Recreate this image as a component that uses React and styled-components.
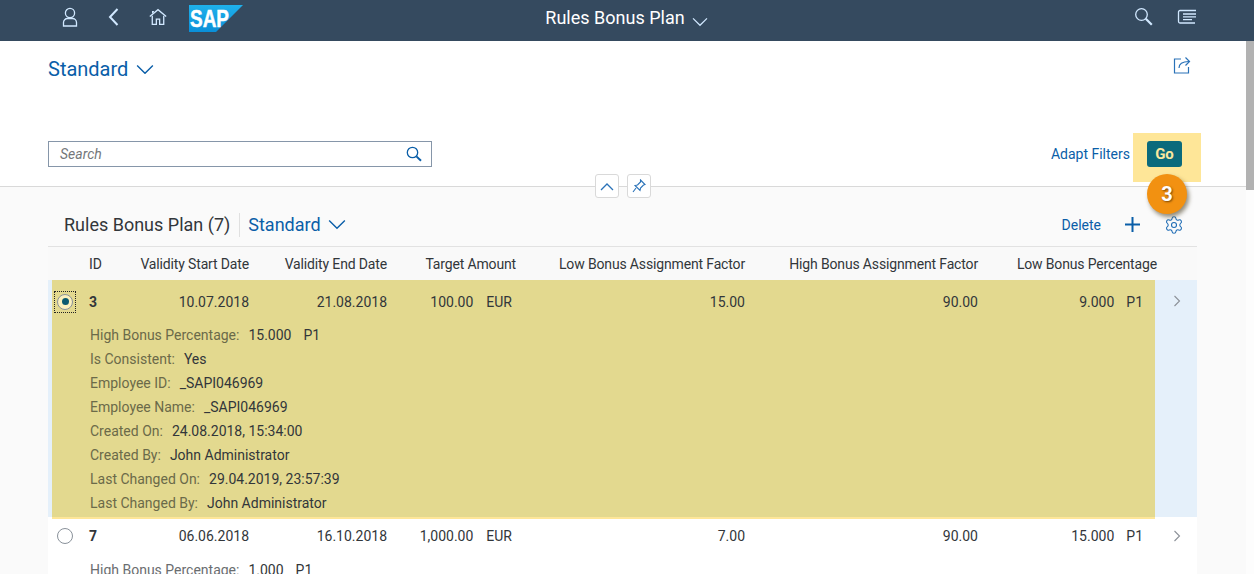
import React from 'react';
import styled, { createGlobalStyle } from 'styled-components';
import { Settings } from 'lucide-react';

const GlobalStyle = createGlobalStyle`
  html, body { margin: 0; padding: 0; height: 100%; overflow: hidden; }
  body { font-family: Roboto, "Liberation Sans", sans-serif; color: #32363a; background: #fafafa; }
  * { box-sizing: border-box; }
`;

const Page = styled.div`
  width: 1254px;
  height: 574px;
  overflow: hidden;
  display: flex;
  flex-direction: column;
`;

const ShellBar = styled.header`
  height: 41px;
  flex: none;
  background: #354a5f;
  display: flex;
  align-items: center;
  position: relative;
  padding: 0 56px 0 59px;
`;

const ShellIcon = styled.svg`
  width: ${p => p.$size || 22}px;
  height: ${p => p.$size || 22}px;
  margin-right: ${p => p.$gap || 0}px;
  margin-top: -7px;
  fill: none;
  stroke: #d1e8ff;
  stroke-width: ${p => p.$stroke || 1.3};
  flex: none;
`;

const ShellTitle = styled.div`
  flex: 1;
  display: flex;
  justify-content: center;
  align-items: center;
  gap: 7px;
  margin-right: 122px;
  margin-top: -7px;
  color: #fff;
  font-size: 18px;
`;

const Body = styled.div`
  flex: 1;
  min-height: 0;
  display: flex;
`;

const Content = styled.main`
  flex: 1;
  min-width: 0;
  position: relative;
`;

const ScrollBar = styled.div`
  width: 8px;
  flex: none;
  background: #fdfdfd;
`;

const ScrollThumb = styled.div`
  height: 149px;
  background: #b2b2b2;
`;

const FilterBar = styled.section`
  height: 146px;
  background: #fff;
  border-bottom: 1px solid #d9d9d9;
  padding: 0 45px 0 48px;
  display: flex;
  flex-direction: column;
`;

const VariantRow = styled.div`
  height: 100px;
  display: flex;
  justify-content: space-between;
  align-items: flex-start;
  padding-top: 14px;
`;

const VariantButton = styled.div`
  display: flex;
  align-items: center;
  gap: ${p => p.$gap || 8}px;
  color: #0a5ea8;
  font-size: ${p => p.$size || 20}px;
  line-height: 28px;
`;

const ShareIcon = styled.svg`
  width: 18px;
  height: 18px;
  margin: 1px 10px 0 0;
  fill: none;
  stroke: #2a72b8;
  stroke-width: 1.2;
`;

const FilterRow = styled.div`
  display: flex;
  align-items: flex-start;
  justify-content: space-between;
`;

const SearchField = styled.div`
  width: 384px;
  height: 26px;
  border: 1px solid #8696a9;
  display: flex;
  align-items: center;
  justify-content: space-between;
  padding: 0 9px 0 11px;
  color: #74777a;
  font-size: 14px;
  font-style: italic;
`;

const FilterActions = styled.div`
  display: flex;
  align-items: flex-start;
  gap: 3px;
  margin-top: -8px;
`;

const AdaptFilters = styled.span`
  color: #0a5ea8;
  font-size: 14px;
  line-height: 42px;
`;

const GoHighlight = styled.div`
  width: 68px;
  height: 49px;
  background: #fee698;
  padding: 8px 0 0 14px;
`;

const GoButton = styled.div`
  width: 35px;
  height: 26px;
  border-radius: 3px;
  background: #0b6a7c;
  color: #fbe79e;
  font-size: 15px;
  font-weight: 700;
  display: flex;
  align-items: center;
  justify-content: center;
`;

const CollapseRow = styled.div`
  display: flex;
  justify-content: center;
  gap: 8px;
  height: 24px;
  margin: -13px 0 6px;
`;

const CollapseButton = styled.div`
  width: 24px;
  height: 24px;
  background: #fff;
  border: 1px solid #d9d9d9;
  border-radius: 3px;
  display: flex;
  align-items: center;
  justify-content: center;
`;

const Badge = styled.div`
  position: absolute;
  left: 1147px;
  top: 133px;
  width: 40px;
  height: 40px;
  border-radius: 50%;
  background: #f29111;
  box-shadow: 2px 3px 4px rgba(60, 50, 20, 0.55);
  color: #fff;
  font-size: 20px;
  font-weight: 700;
  text-shadow: 1px 1px 2px rgba(70, 40, 0, 0.7);
  display: flex;
  align-items: center;
  justify-content: center;
`;

const Panel = styled.section`
  margin: 0 49px 0 48px;
`;

const PanelToolbar = styled.div`
  height: 43px;
  background: #fafafa;
  border-bottom: 1px solid #e2e2e2;
  display: flex;
  align-items: center;
  padding: 0 13px 1px 16px;
`;

const PanelTitle = styled.h2`
  margin: 0 8px 0 0;
  font-size: 18px;
  font-weight: 400;
  color: #32363a;
  padding-right: 9px;
  line-height: 24px;
  border-right: 1px solid #e0e0e0;
`;

const ToolbarActions = styled.div`
  margin-left: auto;
  display: flex;
  align-items: center;
  gap: 24px;
  color: #0a5ea8;
  font-size: 14px;
`;

const RowShell = styled.div`
  display: flex;
  background: ${p => (p.$selected ? '#e5f0fa' : p.$header ? '#f9f9f9' : '#fff')};
  padding-left: 4px;
`;

const Main = styled.div`
  width: 1103px;
  flex: none;
  ${p => p.$selected && `
    position: relative;
    z-index: 1;
    background: #e3d98f;
    padding-bottom: 2px;
    margin-bottom: -2px;
    border-bottom: 2px solid #fee698;
  `}
`;

const NavCell = styled.div`
  flex: 1;
  display: flex;
  justify-content: center;
  padding: ${p => p.$top || 15}px 0 0 2px;
`;

const Cells = styled.div`
  display: grid;
  grid-template-columns: 37px 40px 120px 138px 129px 229px 233px 177px;
  align-items: center;
  height: ${p => p.$height || 43}px;
  font-size: 14px;
  padding-bottom: ${p => p.$pad || 0}px;
`;

const HeaderCell = styled.div`
  text-align: ${p => (p.$left ? 'left' : 'right')};
  color: #32363a;
  white-space: nowrap;
  letter-spacing: -0.15px;
  margin-right: ${p => p.$over || 0}px;
`;

const Cell = styled.div`
  text-align: ${p => (p.$left ? 'left' : 'right')};
  white-space: nowrap;
  color: #32363a;
  font-weight: ${p => (p.$bold ? 700 : 400)};
`;

const UnitCell = styled.div`
  display: flex;
  justify-content: flex-end;
  gap: ${p => p.$gap}px;
  padding-right: ${p => p.$right}px;
  color: #32363a;
  white-space: nowrap;
`;

const RadioCell = styled.div`
  display: flex;
  padding-left: 2px;
`;

const RadioFocus = styled.div`
  width: 22px;
  height: 22px;
  border: ${p => (p.$focus ? '1px dotted #222' : '1px solid transparent')};
  display: flex;
  align-items: center;
  justify-content: center;
`;

const Radio = styled.div`
  width: 16px;
  height: 16px;
  border-radius: 50%;
  border: 1px solid #89919a;
  background: ${p => (p.$checked ? '#fbf0bd' : '#fff')};
  display: flex;
  align-items: center;
  justify-content: center;
  &::after {
    content: '';
    display: ${p => (p.$checked ? 'block' : 'none')};
    width: 7px;
    height: 7px;
    border-radius: 50%;
    background: #0b5a70;
  }
`;

const Details = styled.div`
  padding-left: 38px;
  display: flex;
  flex-direction: column;
`;

const DetailRow = styled.div`
  height: 24px;
  display: flex;
  align-items: center;
  gap: 9px;
  font-size: 14px;
  white-space: nowrap;
`;

const DetailLabel = styled.span`
  color: ${p => (p.$onHighlight ? '#6b6a49' : '#6a6d70')};
`;

const DetailValue = styled.span`
  color: #32363a;
  display: flex;
  gap: 12px;
`;

const ChevronDown = ({ size = 18, color = '#0a5ea8' }) => (
  <svg width={size} height={size * 0.6} viewBox="0 0 18 11" fill="none" stroke={color} strokeWidth="1.4">
    <path d="M1 1.5l8 8 8-8" />
  </svg>
);

const RowChevron = () => (
  <svg width="8" height="12" viewBox="0 0 8 12" fill="none" stroke="#8c9198" strokeWidth="1.1">
    <path d="M1.5 1l5 5-5 5" />
  </svg>
);

const SearchIcon = ({ color = '#0a5ea8' }) => (
  <svg width="16" height="16" viewBox="0 0 16 16" fill="none" stroke={color} strokeWidth="1.3">
    <circle cx="6.5" cy="6.5" r="5.2" />
    <path d="M10.4 10.4l4.6 4.4" strokeWidth="2" />
  </svg>
);

const SapLogo = () => (
  <svg width="54" height="27" viewBox="0 0 54 27" style={{ flex: 'none', marginTop: '-4px', marginLeft: '22px' }}>
    <defs>
      <linearGradient id="sapBlue" x1="0" y1="0" x2="0" y2="1">
        <stop offset="0" stopColor="#1fb1ec" />
        <stop offset="1" stopColor="#0a8fd8" />
      </linearGradient>
    </defs>
    <path d="M0 0h54L27 27H0z" fill="url(#sapBlue)" />
    <text x="1" y="21.500" fontFamily="Liberation Sans, sans-serif" fontWeight="700" fontSize="24" fill="#fff" stroke="#fff" strokeWidth=".5" textLength="39" lengthAdjust="spacingAndGlyphs">SAP</text>
  </svg>
);

const detailRows = (pct, unit, rows) => [
  { label: 'High Bonus Percentage:', value: pct, unit },
  ...rows,
];

const firstDetails = detailRows('15.000', 'P1', [
  { label: 'Is Consistent:', value: 'Yes' },
  { label: 'Employee ID:', value: '_SAPI046969' },
  { label: 'Employee Name:', value: '_SAPI046969' },
  { label: 'Created On:', value: '24.08.2018, 15:34:00' },
  { label: 'Created By:', value: 'John Administrator' },
  { label: 'Last Changed On:', value: '29.04.2019, 23:57:39' },
  { label: 'Last Changed By:', value: 'John Administrator' },
]);

const secondDetails = detailRows('1.000', 'P1', []);

function DataCells({ id, start, end, amount, low, high, pct, focus, checked, height, pad }) {
  return (
    <Cells $height={height} $pad={pad}>
      <RadioCell>
        <RadioFocus $focus={focus}><Radio $checked={checked} /></RadioFocus>
      </RadioCell>
      <Cell $left $bold>{id}</Cell>
      <Cell>{start}</Cell>
      <Cell>{end}</Cell>
      <UnitCell $right={4} $gap={13}><span>{amount}</span><span>EUR</span></UnitCell>
      <Cell>{low}</Cell>
      <Cell>{high}</Cell>
      <UnitCell $right={12} $gap={12}><span>{pct}</span><span>P1</span></UnitCell>
    </Cells>
  );
}

function DetailList({ rows, onHighlight }) {
  return (
    <Details>
      {rows.map(d => (
        <DetailRow key={d.label}>
          <DetailLabel $onHighlight={onHighlight}>{d.label}</DetailLabel>
          <DetailValue>
            <span>{d.value}</span>
            {d.unit && <span>{d.unit}</span>}
          </DetailValue>
        </DetailRow>
      ))}
    </Details>
  );
}

function App() {
  return (
    <Page>
      <GlobalStyle />
      <ShellBar>
        <ShellIcon viewBox="0 0 22 22" $gap={22}>
          <circle cx="11" cy="7" r="4.600" />
          <path d="M4.500 20v-3.500a4 4 0 0 1 4-4h5a4 4 0 0 1 4 4V20z" />
        </ShellIcon>
        <ShellIcon viewBox="0 0 22 22" $gap={24} $stroke={2}>
          <path d="M14.500 3l-7.500 8 7.500 8" />
        </ShellIcon>
        <ShellIcon viewBox="0 0 22 22" $size={18} $stroke={1.6}>
          <path d="M1 10.500L11 2l10 8.500" />
          <path d="M4 9.500V20h5v-6.500h4V20h5V9.500" />
          <path d="M6 4.500h-1.500v2" />
        </ShellIcon>
        <SapLogo />
        <ShellTitle>
          Rules Bonus Plan
          <span style={{ marginTop: '6px' }}><ChevronDown size={16} color="#d1e8ff" /></span>
        </ShellTitle>
        <ShellIcon viewBox="0 0 22 22" $gap={22}>
          <circle cx="9.500" cy="8.500" r="5.800" />
          <path d="M13.800 12.800l6 6" strokeWidth="2.200" />
        </ShellIcon>
        <ShellIcon viewBox="0 0 22 22">
          <path d="M20 4.500H4a1.500 1.500 0 0 0-1.500 1.500v9.500A1.500 1.500 0 0 0 4 17h15M7 8h13M7 10.800h13M7 13.600h9" />
        </ShellIcon>
      </ShellBar>

      <Body>
        <Content>
          <FilterBar>
            <VariantRow>
              <VariantButton $size={20}>
                Standard
                <ChevronDown />
              </VariantButton>
              <ShareIcon viewBox="0 0 18 18">
                <path d="M8 3H1.500v14h14v-6" />
                <path d="M6 12c0-4 3-6.500 10-6.500" />
                <path d="M12.500 1.500L16.500 5.500l-4 4" />
              </ShareIcon>
            </VariantRow>
            <FilterRow>
              <SearchField>
                Search
                <SearchIcon />
              </SearchField>
              <FilterActions>
                <AdaptFilters>Adapt Filters</AdaptFilters>
                <GoHighlight><GoButton>Go</GoButton></GoHighlight>
              </FilterActions>
            </FilterRow>
          </FilterBar>

          <CollapseRow>
            <CollapseButton>
              <svg width="14" height="9" viewBox="0 0 14 9" fill="none" stroke="#2a72b8" strokeWidth="1.300">
                <path d="M1 8l6-6 6 6" />
              </svg>
            </CollapseButton>
            <CollapseButton>
              <svg width="14" height="14" viewBox="0 0 14 14" fill="none" stroke="#2a72b8" strokeWidth="1.100">
                <path d="M8.500 1l4.500 4.500-1.500.5-3 3-.5 2.500-5-5L5.500 6l3-3z" />
                <path d="M4 9l-3 4" />
              </svg>
            </CollapseButton>
          </CollapseRow>

          <Badge>3</Badge>

          <Panel>
            <PanelToolbar>
              <PanelTitle>Rules Bonus Plan (7)</PanelTitle>
              <VariantButton $size={18} $gap={7}>
                Standard
                <ChevronDown />
              </VariantButton>
              <ToolbarActions>
                Delete
                <svg width="15" height="15" viewBox="0 0 15 15" stroke="#0a5ea8" strokeWidth="2">
                  <path d="M7.500 0v15M0 7.500h15" />
                </svg>
                <Settings size={20} strokeWidth={1.3} color="#1f6cb5" />
              </ToolbarActions>
            </PanelToolbar>

            <RowShell $header>
              <Main>
                <Cells $height={33}>
                  <span />
                  <HeaderCell $left>ID</HeaderCell>
                  <HeaderCell>Validity Start Date</HeaderCell>
                  <HeaderCell>Validity End Date</HeaderCell>
                  <HeaderCell>Target Amount</HeaderCell>
                  <HeaderCell>Low Bonus Assignment Factor</HeaderCell>
                  <HeaderCell>High Bonus Assignment Factor</HeaderCell>
                  <HeaderCell $over={-2}>Low Bonus Percentage</HeaderCell>
                </Cells>
              </Main>
            </RowShell>

            <RowShell $selected>
              <Main $selected>
                <DataCells id="3" start="10.07.2018" end="21.08.2018" amount="100.00" low="15.00" high="90.00" pct="9.000" checked focus />
                <DetailList rows={firstDetails} onHighlight />
              </Main>
              <NavCell $top={15}><RowChevron /></NavCell>
            </RowShell>

            <RowShell>
              <Main>
                <DataCells id="7" start="06.06.2018" end="16.10.2018" amount="1,000.00" low="7.00" high="90.00" pct="15.000" height={41} pad={3} />
                <DetailList rows={secondDetails} />
              </Main>
              <NavCell $top={13}><RowChevron /></NavCell>
            </RowShell>
          </Panel>
        </Content>
        <ScrollBar><ScrollThumb /></ScrollBar>
      </Body>
    </Page>
  );
}

export default App;
